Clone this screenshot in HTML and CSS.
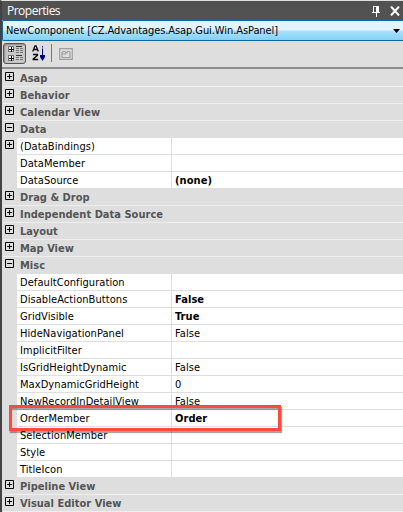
FILE: index.html
```html
<!DOCTYPE html>
<html lang="en">
<head>
<meta charset="utf-8">
<title>Properties</title>
<link rel="stylesheet" href="styles.css">
</head>
<body>
<svg width="0" height="0" class="defs">
  <symbol id="plus" viewBox="0 0 9 9"><path d="M.5.5h8v8h-8zM2 4.5h5M4.5 2v5" fill="none" stroke="#000"/></symbol>
  <symbol id="minus" viewBox="0 0 9 9"><path d="M.5.5h8v8h-8zM2 4.5h5" fill="none" stroke="#000"/></symbol>
</svg>
<div class="panel">
  <header class="title"><span>Properties</span>
    <svg class="pin" width="8" height="11" viewBox="0 0 8 11" shape-rendering="crispEdges"><path d="M1 0h6v6h1v1H5v4H4V7H0V6h1zM2 1v5h2V1z" fill="#fff" fill-rule="evenodd"/></svg>
    <svg class="close" width="10" height="10" viewBox="0 0 10 10"><path d="M1 .6l8 8.800M9 .6L1 9.400" stroke="#fff" stroke-width="2.100"/></svg>
  </header>
  <div class="combo"><span>NewComponent [CZ.Advantages.Asap.Gui.Win.AsPanel]</span>
    <svg width="7" height="4" viewBox="0 0 7 4"><path d="M0 0h7L3.500 4z"/></svg>
  </div>
  <div class="toolbar">
    <div class="tool">
      <svg width="17" height="17" viewBox="0 0 17 17" shape-rendering="crispEdges">
        <path d="M1 1h6v6H1zM1 10h6v6H1z" fill="#fff"/>
        <path d="M1.500 1.500h5v5h-5zM1.500 10.500h5v5h-5z" fill="none" stroke="#777"/>
        <path d="M2 4.500h5M4.500 2v5M2 13.500h5M4.500 11v5" stroke="#000"/>
        <path d="M9 1.500h6M9 10.500h6" stroke="#333"/>
        <path d="M9 3.500h3M13 3.500h3M9 5.500h3M13 5.500h3M9 7.500h3M13 7.500h3M9 12.500h3M13 12.500h3M9 14.500h3M13 14.500h3" stroke="#777"/>
      </svg>
    </div>
    <svg class="sort" width="14" height="16" viewBox="0 0 14 16">
      <path d="M.7 6.500L3 .8h1l2.300 5.700M1.500 4.500h4M1 9.500h4.500v.7L1.200 14v.5h5" fill="none" stroke="#000" stroke-width="1.300"/>
      <path d="M10.500 1v1.500M10.500 3.500V11" stroke="#000080"/><path d="M8 10h5v2l-2.500 4L8 12z" fill="#000080"/>
    </svg>
    <i class="divider"></i>
    <svg class="pages" width="14" height="12" viewBox="0 0 14 12"><path d="M.7.7h12.600v10.600H.7zM3 9.500V4.500l1-1h2l1 1V5h1l.5-1.500h2l.5 1v5zM3 6h4" fill="none" stroke="#a0a0a0" stroke-width="1.200"/></svg>
  </div>
  <main class="grid">
    <div class="cat"><svg><use href="#plus"/></svg><b>Asap</b></div>
    <div class="cat"><svg><use href="#plus"/></svg><b>Behavior</b></div>
    <div class="cat"><svg><use href="#plus"/></svg><b>Calendar View</b></div>
    <div class="cat open"><svg><use href="#minus"/></svg><b>Data</b></div>
    <div class="row"><i><svg><use href="#plus"/></svg></i><span>(DataBindings)</span><span></span></div>
    <div class="row"><i></i><span>DataMember</span><span></span></div>
    <div class="row"><i></i><span>DataSource</span><span class="set">(none)</span></div>
    <div class="cat"><svg><use href="#plus"/></svg><b>Drag &amp; Drop</b></div>
    <div class="cat"><svg><use href="#plus"/></svg><b>Independent Data Source</b></div>
    <div class="cat"><svg><use href="#plus"/></svg><b>Layout</b></div>
    <div class="cat"><svg><use href="#plus"/></svg><b>Map View</b></div>
    <div class="cat open"><svg><use href="#minus"/></svg><b>Misc</b></div>
    <div class="row"><i></i><span>DefaultConfiguration</span><span></span></div>
    <div class="row"><i></i><span>DisableActionButtons</span><span class="set">False</span></div>
    <div class="row"><i></i><span>GridVisible</span><span class="set">True</span></div>
    <div class="row"><i></i><span>HideNavigationPanel</span><span>False</span></div>
    <div class="row"><i></i><span>ImplicitFilter</span><span></span></div>
    <div class="row"><i></i><span>IsGridHeightDynamic</span><span>False</span></div>
    <div class="row"><i></i><span>MaxDynamicGridHeight</span><span>0</span></div>
    <div class="row"><i></i><span>NewRecordInDetailView</span><span>False</span></div>
    <div class="row"><i></i><span>OrderMember</span><span class="set">Order</span></div>
    <div class="row"><i></i><span>SelectionMember</span><span></span></div>
    <div class="row"><i></i><span>Style</span><span></span></div>
    <div class="row"><i></i><span>TitleIcon</span><span></span></div>
    <div class="cat"><svg><use href="#plus"/></svg><b>Pipeline View</b></div>
    <div class="cat"><svg><use href="#plus"/></svg><b>Visual Editor View</b></div>
  </main>
  <div class="highlight"></div>
</div>
</body>
</html>
```
FILE: styles.css
```css
* { box-sizing: border-box; }
body { margin: 0; font: 11px/18px "DejaVu Sans Condensed", "DejaVu Sans", sans-serif; font-stretch: condensed; color: #000; }
.defs { position: absolute; }
.panel { position: relative; width: 403px; height: 512px; overflow: hidden; background: #dedede; border-left: 2px solid #424242; border-top: 1px solid #dedede; }
.title { height: 19px; background: #525252; color: #fff; display: flex; align-items: center; padding: 0 3px 0 5px; font: 12px/18px "Open Sans", sans-serif; letter-spacing: -.5px; }
.title span { flex: 1; }
.title svg { margin-top: 1px; }
.title .pin { margin-right: 10px; }
.combo { height: 21px; border: 1px solid #0d69a0; border-right: 0; border-radius: 2px 0 0 2px; background: linear-gradient(#e2f5ff 0 45%, #a9e0fb 55%, #83d1f7); display: flex; align-items: center; justify-content: space-between; padding: 0 3px 0 3px; white-space: nowrap; letter-spacing: -.08px; }
.combo svg { margin-top: 1px; }
.toolbar { height: 26px; display: flex; align-items: center; padding: 0 0 2px 1px; }
.tool { width: 23px; height: 21px; margin-top: 1px; border: 1px solid #555; border-radius: 3px; background: #c8c8c8; box-shadow: inset 1px 1px 2px #888; padding: 1px 0 0 3px; line-height: 0; }
.sort { margin-left: 6px; }
.divider { width: 1px; height: 18px; background: #777; margin: 0 7px 0 5px; }
.pages { margin-top: 1px; }
.grid { border-top: 2px solid #8e8e8e; padding: 1px 0 0 1px; }
.cat { height: 17px; display: flex; border-bottom: 1px solid #eee; color: #555; padding-left: 2px; letter-spacing: .02px; }
.cat.open { border-color: #dedede; }
.grid svg { width: 9px; height: 9px; flex: none; margin-top: 2px; }
.cat b { margin-left: 6px; }
.row { height: 17px; display: grid; grid-template-columns: 14px 154px 1fr; letter-spacing: .07px; }
.row i { padding-left: 2px; line-height: 0; }
.row span { height: 17px; background: #fff; border-bottom: 1px solid #dedede; padding-left: 3px; white-space: nowrap; }
.row span:last-child { border-left: 1px solid #dedede; padding-left: 3px; }
.row .set { font-weight: bold; }
.highlight { position: absolute; left: 7px; top: 404px; width: 272px; height: 26px; border: 3px solid #fa4b40; box-shadow: 1px 2px 1px rgba(0,0,0,.35), inset 0 2px 1px rgba(0,0,0,.35); }
```
